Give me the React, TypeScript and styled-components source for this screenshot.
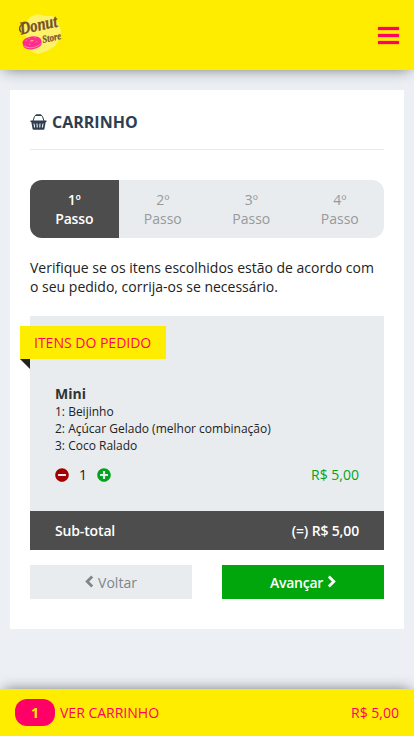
import React from 'react';
import styled, { createGlobalStyle } from 'styled-components';
import { FaMinusCircle, FaPlusCircle } from 'react-icons/fa';

const GlobalStyle = createGlobalStyle`
  * { box-sizing: border-box; }
  body {
    margin: 0;
    background: #ecf0f5;
    color: #222;
    font: 14px/19px "Open Sans", sans-serif;
  }
  button { font: inherit; border: 0; padding: 0; background: none; }
`;

const Page = styled.div`
  display: flex;
  flex-direction: column;
  height: 736px;
  overflow: hidden;
`;

const Header = styled.header`
  display: flex;
  flex: none;
  align-items: center;
  justify-content: space-between;
  height: 70px;
  padding: 0 15px;
  background: #ffed00;
  box-shadow: 0 3px 14px -4px rgba(0, 0, 0, 0.55);
`;

const Logo = styled.svg`
  width: 50px;
  height: 50px;
  overflow: visible;
`;

const MenuButton = styled.button`
  display: grid;
  gap: 4px;
  width: 21px;
  padding-top: 1px;
`;

const MenuLine = styled.span`
  height: 3px;
  border-radius: 0.5px;
  background: #ff0066;
  box-shadow: 0 0 0 0.5px rgba(255, 0, 102, 0.25);
`;

const Card = styled.main`
  flex: none;
  height: 539px;
  margin: 20px 10px 0;
  padding: 20px;
  background: #fff;
`;

const Title = styled.h1`
  display: flex;
  align-items: center;
  gap: 5px;
  height: 40px;
  margin: 0;
  padding-bottom: 15px;
  border-bottom: 1px solid #eaeaea;
  color: #2c3e50;
  font-size: 16px;
  font-weight: 700;
`;

const Steps = styled.ol`
  display: grid;
  grid-template-columns: repeat(4, 1fr);
  height: 58px;
  margin: 30px 0 20px;
  padding: 0;
  overflow: hidden;
  border-radius: 12px;
  list-style: none;
  background: #e8ecef;
`;

const Step = styled.li<{ $active?: boolean }>`
  padding-top: 10px;
  text-align: center;
  color: ${(p) => (p.$active ? '#fff' : '#999')};
  background: ${(p) => (p.$active ? '#4d4d4d' : 'transparent')};
  font-weight: ${(p) => (p.$active ? 600 : 400)};
  letter-spacing: ${(p) => (p.$active ? '-0.15px' : 'normal')};
`;

const Intro = styled.p`
  height: 38px;
  margin: 0 0 20px;
`;

const Order = styled.section`
  height: 195px;
  padding-top: 10px;
  background: #e8ecef;
`;

const Ribbon = styled.h2`
  position: relative;
  width: 146px;
  height: 33px;
  margin: 0 0 0 -10px;
  padding-left: 14px;
  background: #ffed00;
  color: #ff0066;
  font-size: 14px;
  font-weight: 400;
  line-height: 33px;

  &::after {
    content: '';
    position: absolute;
    top: 100%;
    left: 0;
    border-top: 10px solid #222;
    border-left: 10px solid transparent;
  }
`;

const Item = styled.div`
  padding: 26px 25px 0;
`;

const ItemName = styled.h3`
  margin: 0;
  font-size: 14px;
  font-weight: 700;
  line-height: 18px;
  color: #333;
`;

const Flavors = styled.div`
  font-size: 12px;
  line-height: 17px;
`;

const ItemFooter = styled.div`
  display: flex;
  justify-content: space-between;
  margin-top: 11px;
`;

const Quantity = styled.div`
  display: flex;
  align-items: center;
  gap: 10px;
`;

const RoundButton = styled.button<{ $color: string }>`
  display: flex;
  color: ${(p) => p.$color};
  font-size: 14px;
`;

const Price = styled.span`
  color: #00a31b;
`;

const Subtotal = styled.div`
  display: flex;
  align-items: center;
  justify-content: space-between;
  height: 39px;
  padding: 0 25px;
  background: #4d4d4d;
  color: #fff;
  font-weight: 600;
  letter-spacing: -0.15px;
`;

const Actions = styled.div`
  display: grid;
  grid-template-columns: 1fr 1fr;
  gap: 30px;
  margin-top: 15px;
`;

const Action = styled.button<{ $primary?: boolean }>`
  display: flex;
  align-items: center;
  justify-content: center;
  gap: 4px;
  height: 34px;
  background: ${(p) => (p.$primary ? '#00a60b' : '#e8ecef')};
  color: ${(p) => (p.$primary ? '#fff' : '#7f8689')};
  font-weight: ${(p) => (p.$primary ? 600 : 400)};
  letter-spacing: ${(p) => (p.$primary ? '-0.25px' : 'normal')};
`;

const CartBar = styled.footer`
  display: flex;
  flex: none;
  align-items: center;
  height: 47px;
  margin-top: auto;
  padding: 0 15px;
  background: #ffed00;
  color: #ff0066;
  box-shadow: 0 -3px 14px -4px rgba(0, 0, 0, 0.55);
`;

const Badge = styled.span`
  width: 40px;
  height: 27px;
  margin-right: 5px;
  border-radius: 12px;
  background: #ff0066;
  color: #ffed00;
  font-weight: 700;
  line-height: 27px;
  text-align: center;
`;

const CartTotal = styled.span`
  margin-left: auto;
`;

const DonutLogo = () => (
  <Logo viewBox="0 0 50 50" role="img" aria-label="Donut Store">
    <path d="M15 7l8-3 7 2 8 0 5 7 3 7-1 8-5 8-8 5-9 3-7-3-5-5 1-8-5-9z" fill="#fff26b" />
    <g transform="rotate(-8 17 32)">
      <ellipse cx="17" cy="34" rx="9.5" ry="5.4" fill="#ff2d8d" />
      <ellipse cx="17" cy="33" rx="9.5" ry="5" fill="#ff9b9b" />
      <ellipse cx="17" cy="31.8" rx="9.6" ry="5.4" fill="#ff2d8d" />
      <ellipse cx="17" cy="30.8" rx="2" ry=".7" fill="#ffad72" />
      <path d="M11 30l1-1M14 34l1 0M21 33l1-1M20 28l1 0M14 28l1 0" stroke="#ffa3c5" strokeWidth=".7" />
    </g>
    <g fill="#76502c" stroke="#76502c" fontFamily="Liberation Serif, serif" fontStyle="italic" fontWeight="700">
      <text transform="translate(6 24.5) rotate(-12)" strokeWidth=".3" fontSize="18" textLength="38" lengthAdjust="spacingAndGlyphs">Donut</text>
      <text transform="translate(28 33) rotate(-12)" strokeWidth=".25" fontSize="10.5" textLength="19" lengthAdjust="spacingAndGlyphs">Store</text>
    </g>
    <path d="M6 22c-3-3-1-8 4-9" fill="none" stroke="#76502c" strokeWidth="1.3" strokeLinecap="round" />
  </Logo>
);

const BasketIcon = () => (
  <svg width="17" height="16" viewBox="0 0 17 16" fill="none" aria-hidden="true">
    <path d="M3 7L4.5 2.5Q4.8 1.5 6 1.5H11Q12.2 1.5 12.5 2.5L14 7" stroke="#2c3e50" strokeWidth="1" />
    <path d="M6.5 1.2H10.5" stroke="#2c3e50" strokeWidth="1.8" strokeLinecap="round" />
    <path d="M.7 6.5H16.3Q17 7 16.3 8H.7Q0 7 .7 6.5ZM1.3 8H15.7L14.4 15Q14.2 15.7 13.5 15.7H3.5Q2.8 15.7 2.6 15Z" fill="#2c3e50" />
    <path d="M4 9.5l.6 4M7 9.5l.2 4M10 9.5l-.2 4M13 9.5l-.6 4" stroke="#fff" strokeWidth="1" />
  </svg>
);

const Chevron = ({ right = false }: { right?: boolean }) => (
  <svg width="9" height="14" viewBox="0 0 9 14" fill="none" aria-hidden="true">
    <path d={right ? 'M1.8 1.5L6.8 6.5L1.8 11.5' : 'M7.2 1.5L2.2 6.5L7.2 11.5'} stroke="currentColor" strokeWidth="2.8" />
  </svg>
);

const steps = ['1º', '2º', '3º', '4º'];

export default function App() {
  return (
    <>
      <GlobalStyle />
      <Page>
        <Header>
          <DonutLogo />
          <MenuButton aria-label="Menu"><MenuLine /><MenuLine /><MenuLine /></MenuButton>
        </Header>
        <Card>
          <Title><BasketIcon />CARRINHO</Title>
          <Steps>
            {steps.map((step, index) => (
              <Step key={step} $active={index === 0}>{step}<br />Passo</Step>
            ))}
          </Steps>
          <Intro>Verifique se os itens escolhidos estão de acordo com o seu pedido, corrija-os se necessário.</Intro>
          <Order>
            <Ribbon>ITENS DO PEDIDO</Ribbon>
            <Item>
              <ItemName>Mini</ItemName>
              <Flavors>1: Beijinho<br />2: Açúcar Gelado (melhor combinação)<br />3: Coco Ralado</Flavors>
              <ItemFooter>
                <Quantity>
                  <RoundButton $color="#a30000" aria-label="Diminuir"><FaMinusCircle /></RoundButton>
                  <span>1</span>
                  <RoundButton $color="#00a31b" aria-label="Aumentar"><FaPlusCircle /></RoundButton>
                </Quantity>
                <Price>R$ 5,00</Price>
              </ItemFooter>
            </Item>
          </Order>
          <Subtotal><span>Sub-total</span><span>(=) R$ 5,00</span></Subtotal>
          <Actions>
            <Action><Chevron />Voltar</Action>
            <Action $primary>Avançar<Chevron right /></Action>
          </Actions>
        </Card>
        <CartBar>
          <Badge>1</Badge>
          <span>VER CARRINHO</span>
          <CartTotal>R$ 5,00</CartTotal>
        </CartBar>
      </Page>
    </>
  );
}
